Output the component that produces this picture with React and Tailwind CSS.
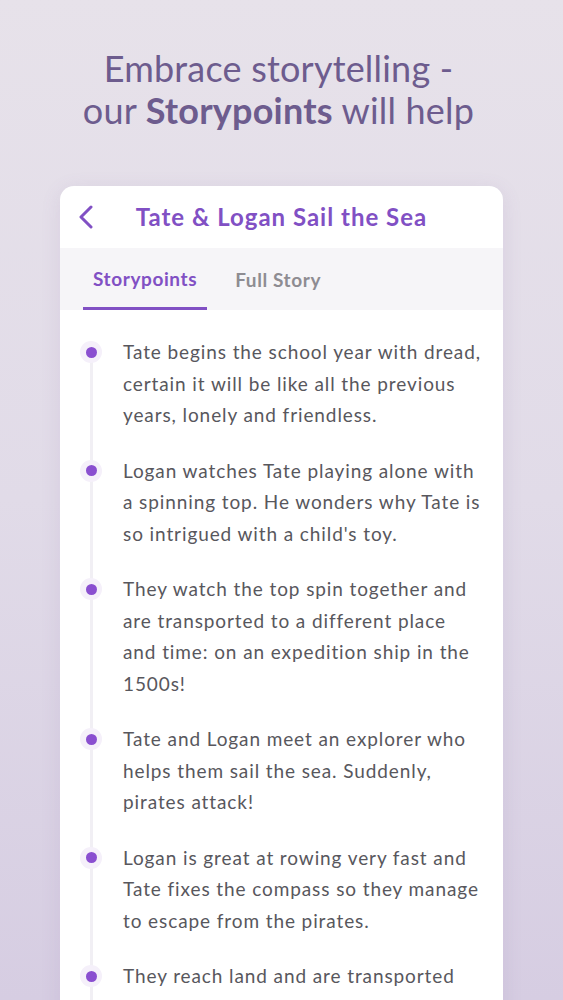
import React from "react";

const items = [
  ["Tate begins the school year with dread,", "certain it will be like all the previous", "years, lonely and friendless."],
  ["Logan watches Tate playing alone with", "a spinning top. He wonders why Tate is", "so intrigued with a child's toy."],
  ["They watch the top spin together and", "are transported to a different place", "and time: on an expedition ship in the", "1500s!"],
  ["Tate and Logan meet an explorer who", "helps them sail the sea. Suddenly,", "pirates attack!"],
  ["Logan is great at rowing very fast and", "Tate fixes the compass so they manage", "to escape from the pirates."],
  ["They reach land and are transported", "back to school. Tate has found a best", "friend at last."],
];

export default function App() {
  return (
    <div
      className="h-[1000px] w-[563px] overflow-hidden bg-gradient-to-b from-[#e7e2ea] via-[#e1dbe8] to-[#d6cde2]"
      style={{ fontFamily: "Lato, 'Open Sans', sans-serif" }}
    >
      <div className="pt-[47px] pr-[6px] text-center text-[36px] leading-[42px] tracking-[0.2px] text-[#6d5c8e]">
        <div>Embrace storytelling -</div>
        <div>
          our <span className="font-bold">Storypoints</span> will help
        </div>
      </div>

      <div className="mx-auto mt-[55px] w-[443px] overflow-hidden rounded-t-[14px] bg-white shadow-[0_4px_20px_rgba(120,90,160,0.12)]">
        <div className="grid h-[62px] grid-cols-[50px_1fr_50px] items-center">
          <div className="flex justify-center pl-[2px]">
            <svg width="16" height="24" viewBox="0 0 16 24" fill="none">
              <path d="M13 2 L3 12 L13 22" stroke="#8150c4" strokeWidth="3" strokeLinecap="round" strokeLinejoin="round" />
            </svg>
          </div>
          <div className="text-center text-[24px] font-bold tracking-[1px] text-[#8150c4]">Tate &amp; Logan Sail the Sea</div>
          <div />
        </div>

        <div className="flex h-[62px] items-stretch bg-[#f6f5f8] pl-[23px]">
          <div className="flex items-center border-b-[3px] border-[#8150c4] px-[10px] pt-[3px] text-[19px] font-bold tracking-[0.6px] text-[#8150c4]">
            Storypoints
          </div>
          <div className="ml-[18px] flex items-center px-[10px] pt-[3px] text-[19px] font-bold tracking-[0.6px] text-[#8e8c92]">
            Full Story
          </div>
        </div>

        <div className="relative pt-[26px] pb-10">
          <div className="absolute left-[30px] top-[40px] bottom-0 w-[3px] bg-[#f1eff4]" />
          <div className="flex flex-col gap-[24px]">
            {items.map((lines, i) => (
              <div key={i} className="relative flex">
                <div className="relative w-[63px] shrink-0">
                  <div className="absolute left-[20px] top-[5px] flex h-[22px] w-[22px] items-center justify-center rounded-full bg-[#f5f0fa]">
                    <div className="h-[11px] w-[11px] rounded-full bg-[#8a4fd0]" />
                  </div>
                </div>
                <div className="text-[19px] leading-[31.5px] tracking-[0.9px] text-[#58575d]">
                  {lines.map((l, j) => (
                    <div key={j} className="whitespace-nowrap">{l}</div>
                  ))}
                </div>
              </div>
            ))}
          </div>
        </div>
      </div>
    </div>
  );
}
